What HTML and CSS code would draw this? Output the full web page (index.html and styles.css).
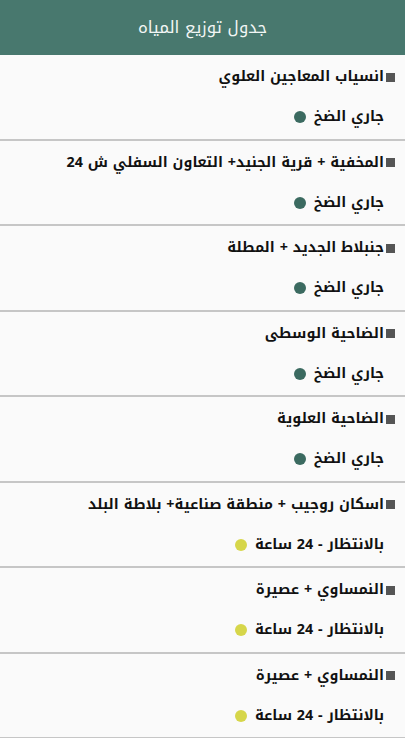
FILE: index.html
```html
<!DOCTYPE html>
<html lang="ar" dir="rtl">
<head>
<meta charset="utf-8">
<link rel="stylesheet" href="styles.css">
</head>
<body>
<header class="bar"><h1 class="title">جدول توزيع المياه</h1></header>
<ul class="list">
  <li class="item"><div class="name"><span class="sq"></span>انسياب المعاجين العلوي</div><div class="status"><span>جاري الضخ</span><span class="dot on"></span></div></li>
  <li class="item"><div class="name"><span class="sq"></span>المخفية + قرية الجنيد+ التعاون السفلي ش 24</div><div class="status"><span>جاري الضخ</span><span class="dot on"></span></div></li>
  <li class="item"><div class="name"><span class="sq"></span>جنبلاط الجديد + المطلة</div><div class="status"><span>جاري الضخ</span><span class="dot on"></span></div></li>
  <li class="item"><div class="name"><span class="sq"></span>الضاحية الوسطى</div><div class="status"><span>جاري الضخ</span><span class="dot on"></span></div></li>
  <li class="item"><div class="name"><span class="sq"></span>الضاحية العلوية</div><div class="status"><span>جاري الضخ</span><span class="dot on"></span></div></li>
  <li class="item"><div class="name"><span class="sq"></span>اسكان روجيب + منطقة صناعية+ بلاطة البلد</div><div class="status"><span>بالانتظار - 24 ساعة</span><span class="dot wait"></span></div></li>
  <li class="item"><div class="name"><span class="sq"></span>النمساوي + عصيرة</div><div class="status"><span>بالانتظار - 24 ساعة</span><span class="dot wait"></span></div></li>
  <li class="item"><div class="name"><span class="sq"></span>النمساوي + عصيرة</div><div class="status"><span>بالانتظار - 24 ساعة</span><span class="dot wait"></span></div></li>
</ul>
</body>
</html>
```
FILE: styles.css
```css
html, body { margin: 0; padding: 0; }
body {
  background: #fafafa;
  font-family: "Noto Kufi Arabic", "Noto Sans Arabic UI", "Noto Sans Arabic", "DejaVu Sans", sans-serif;
  color: #111;
  width: 405px;
  overflow: hidden;
}
.bar {
  height: 55px;
  background: #48786e;
  display: flex;
  align-items: center;
  justify-content: center;
}
.title {
  margin: 0;
  color: #f2f6f5;
  font-size: 16.5px;
  font-weight: normal;
}
.list { list-style: none; margin: 0; padding: 0; }
.item {
  height: 83.5px;
  border-bottom: 2px solid #c6c6c6;
  padding: 0 10px 0 8px;
  display: flex;
  flex-direction: column;
  justify-content: center;
  gap: 18px;
}
.name {
  font-size: 14.3px;
  font-weight: bold;
  display: flex;
  align-items: center;
  line-height: 22px;
  padding-top: 1px;
}
.sq {
  width: 9px; height: 9px;
  background: #555;
  margin-left: 2px;
  flex: none;
}
.status {
  font-size: 14.3px;
  font-weight: bold;
  display: flex;
  align-items: center;
  gap: 8px;
  padding-right: 11px;
  line-height: 22px;
}
.dot { width: 12px; height: 12px; border-radius: 50%; flex: none; }
.dot.on { background: #3b6a60; }
.dot.wait { background: #d6d64a; }
```
